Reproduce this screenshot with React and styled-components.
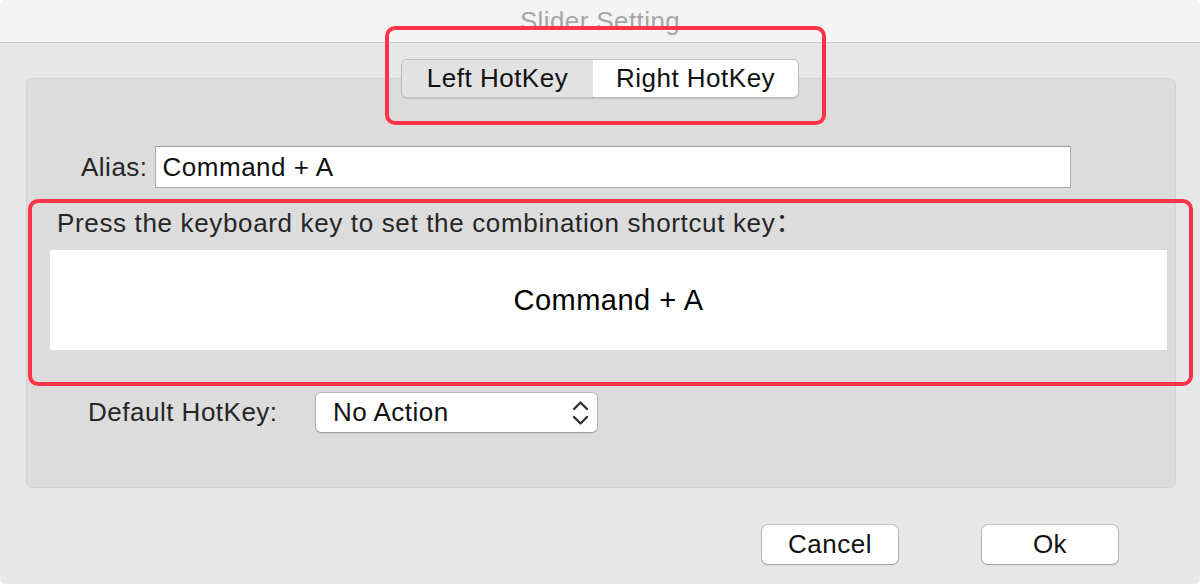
import React from "react";
import styled, { createGlobalStyle } from "styled-components";

const Global = createGlobalStyle`
  html, body { margin: 0; padding: 0; background: #ffffff; }
  body { font-family: "Liberation Sans", Arial, "Noto Sans CJK SC", sans-serif; }
  * { box-sizing: border-box; }
`;

const Window = styled.div`
  position: relative;
  width: 1200px;
  height: 584px;
  background: #e7e7e7;
  border-radius: 6px;
  overflow: hidden;
  display: flex;
  flex-direction: column;
  letter-spacing: 0.5px;
`;

const TitleBar = styled.div`
  height: 43px;
  flex: none;
  background: #f4f4f4;
  border-bottom: 1px solid #cdcdcd;
  text-align: center;
  font-size: 26px;
  line-height: 42px;
  color: #a6a6a6;
  letter-spacing: 0.4px;
`;

const Body = styled.div`
  display: flex;
  flex-direction: column;
  padding-top: 16px;
`;

const Segmented = styled.div`
  align-self: flex-start;
  margin-left: 401px;
  display: flex;
  height: 39px;
  border: 1px solid #bdbdbd;
  border-radius: 6px;
  overflow: hidden;
  box-shadow: 0 1px 1px rgba(0, 0, 0, 0.12);
  position: relative;
  z-index: 2;
`;

const Segment = styled.div`
  width: ${(p) => p.$w}px;
  display: flex;
  align-items: center;
  justify-content: center;
  font-size: 26px;
  color: #111;
  background: ${(p) => (p.$active ? "#ffffff" : "#e2e2e2")};
`;

const GroupBox = styled.div`
  margin: -20px 0 0 26px;
  width: 1150px;
  height: 410px;
  background: #dcdcdc;
  border: 1px solid #d2d2d2;
  border-radius: 6px;
  padding-top: 67px;
  display: flex;
  flex-direction: column;
`;

const AliasRow = styled.div`
  display: flex;
  align-items: center;
  padding-left: 54px;
  gap: 7px;
`;

const Label = styled.span`
  font-size: 26px;
  color: #262626;
  width: ${(p) => (p.$w ? `${p.$w}px` : "auto")};
`;

const TextInput = styled.div`
  width: 916px;
  height: 42px;
  background: #fff;
  border: 1px solid #a9a9a9;
  border-top-color: #9c9c9c;
  padding-left: 7px;
  display: flex;
  align-items: center;
  font-size: 26px;
  color: #111;
`;

const ShortcutSection = styled.div`
  margin-top: 20px;
  padding: 0 8px 0 23px;
  display: flex;
  flex-direction: column;
`;

const Prompt = styled.div`
  font-size: 26px;
  line-height: 30px;
  color: #262626;
  padding-left: 7px;
  letter-spacing: 0.65px;
`;

const KeyDisplay = styled.div`
  margin-top: 12px;
  height: 100px;
  background: #ffffff;
  display: flex;
  align-items: center;
  justify-content: center;
  font-size: 29px;
  color: #000;
`;

const DefaultRow = styled.div`
  margin-top: 43px;
  padding-left: 61px;
  display: flex;
  align-items: center;
`;

const Select = styled.div`
  width: 281px;
  height: 39px;
  background: #fff;
  border-radius: 5px;
  box-shadow: 0 0 0 1px rgba(0, 0, 0, 0.14), 0 1px 2px rgba(0, 0, 0, 0.2);
  display: flex;
  align-items: center;
  justify-content: space-between;
  padding: 0 8px 0 17px;
  font-size: 26px;
  color: #111;
`;

const Footer = styled.div`
  display: flex;
  justify-content: flex-end;
  gap: 84px;
  padding: 37px 82px 0 0;
`;

const Button = styled.div`
  width: 136px;
  height: 39px;
  background: #fff;
  border-radius: 6px;
  box-shadow: 0 0 0 1px rgba(0, 0, 0, 0.16), 0 1px 2px rgba(0, 0, 0, 0.2);
  display: flex;
  align-items: center;
  justify-content: center;
  font-size: 26px;
  color: #111;
`;

const Annotation = styled.div`
  position: absolute;
  left: ${(p) => p.$x}px;
  top: ${(p) => p.$y}px;
  width: ${(p) => p.$w}px;
  height: ${(p) => p.$h}px;
  border: 4px solid #ff3547;
  border-radius: 10px;
  z-index: 5;
  pointer-events: none;
`;

const Chevrons = () => (
  <svg width="17" height="26" viewBox="0 0 17 26" fill="none">
    <path d="M2 9 L8.5 2.5 L15 9" stroke="#333" strokeWidth="2.4" strokeLinecap="round" strokeLinejoin="round" />
    <path d="M2 17 L8.5 23.5 L15 17" stroke="#333" strokeWidth="2.4" strokeLinecap="round" strokeLinejoin="round" />
  </svg>
);

export default function App() {
  return (
    <>
      <Global />
      <Window>
        <TitleBar>Slider Setting</TitleBar>
        <Body>
          <Segmented>
            <Segment $w={191}>Left HotKey</Segment>
            <Segment $w={205} $active>Right HotKey</Segment>
          </Segmented>
          <GroupBox>
            <AliasRow>
              <Label>Alias:</Label>
              <TextInput>Command + A</TextInput>
            </AliasRow>
            <ShortcutSection>
              <Prompt>Press the keyboard key to set the combination shortcut key：</Prompt>
              <KeyDisplay>Command + A</KeyDisplay>
            </ShortcutSection>
            <DefaultRow>
              <Label $w={228}>Default HotKey:</Label>
              <Select>
                <span>No Action</span>
                <Chevrons />
              </Select>
            </DefaultRow>
          </GroupBox>
          <Footer>
            <Button>Cancel</Button>
            <Button>Ok</Button>
          </Footer>
        </Body>
        <Annotation $x={385} $y={26} $w={441} $h={99} />
        <Annotation $x={28} $y={199} $w={1165} $h={187} />
      </Window>
    </>
  );
}
